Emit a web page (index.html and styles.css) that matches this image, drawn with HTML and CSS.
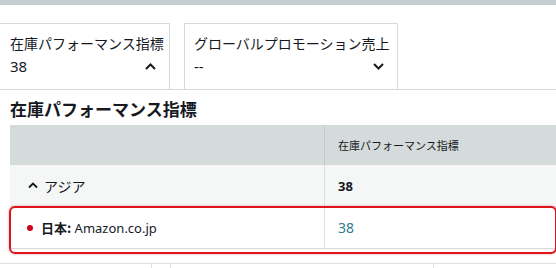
FILE: index.html
```html
<!DOCTYPE html>
<html lang="ja">
<head>
    <meta charset="UTF-8">
    <meta name="viewport" content="width=device-width, initial-scale=1.0">
    <title>在庫パフォーマンス指標</title>
    <link rel="stylesheet" href="styles.css">
</head>
<body>

    <div class="topbar"></div>

    <!-- Metric cards -->
    <div class="cards">
        <div class="card card-first">
            <div class="card-label">在庫パフォーマンス指標</div>
            <div class="card-value">
                <span>38</span>
                <svg class="chevron" width="11" height="7" viewBox="0 0 11 7"><path d="M1 6 L5.5 1.5 L10 6" fill="none" stroke="#16191f" stroke-width="2"/></svg>
            </div>
        </div>
        <div class="card card-second">
            <div class="card-label">グローバルプロモーション売上</div>
            <div class="card-value">
                <span>--</span>
                <svg class="chevron" width="11" height="7" viewBox="0 0 11 7"><path d="M1 1 L5.5 5.5 L10 1" fill="none" stroke="#16191f" stroke-width="2"/></svg>
            </div>
        </div>
    </div>

    <h2 class="section-title">在庫パフォーマンス指標</h2>

    <!-- Table -->
    <div class="table">
        <div class="row row-head">
            <div class="cell cell-name"></div>
            <div class="cell cell-value">在庫パフォーマンス指標</div>
        </div>
        <div class="row row-group">
            <div class="cell cell-name">
                <svg class="group-chevron" width="10" height="7" viewBox="0 0 10 7"><path d="M1 5.5 L5 1.5 L9 5.5" fill="none" stroke="#16191f" stroke-width="1.8"/></svg>
                アジア
            </div>
            <div class="cell cell-value bold">38</div>
        </div>
        <div class="row row-item">
            <div class="cell cell-name">
                <span class="dot"></span>
                <b>日本:</b>&nbsp;Amazon.co.jp
            </div>
            <div class="cell cell-value link">38</div>
        </div>
    </div>

    <div class="footer-strip">
        <div class="strip-cell" style="width: 152px"></div>
        <div class="strip-cell" style="width: 19px"></div>
        <div class="strip-cell" style="width: 263px"></div>
    </div>

</body>
</html>
```

FILE: styles.css
```css
* {
    margin: 0;
    padding: 0;
    box-sizing: border-box;
}

body {
    width: 556px;
    height: 268px;
    overflow: hidden;
    background-color: #fff;
    color: #16191f;
    font-family: "Noto Sans", "Noto Sans CJK JP", sans-serif;
}

.topbar {
    height: 5px;
    background-color: #c6cfd0;
}

/* Metric cards */
.cards {
    display: flex;
    gap: 14px;
    padding-top: 18px;
    border-bottom: 1px solid #d5dbdb;
}

.card {
    height: 66px;
    padding: 9px 16px 0 9px;
    border: 1px solid #d5dbdb;
    border-bottom: none;
}

.card-first {
    width: 171px;
    margin-left: -1px;
    padding-left: 10px;
}

.card-second {
    width: 214px;
}

.card-label {
    font-family: "Noto Sans CJK JP", sans-serif;
    font-size: 14px;
    line-height: 20px;
    white-space: nowrap;
}

.card-value {
    display: flex;
    justify-content: space-between;
    align-items: center;
    margin-top: 3px;
    font-size: 15px;
    line-height: 20px;
}

.chevron {
    margin-right: -3px;
}

.section-title {
    margin: 7px 0 0 10px;
    font-family: "Noto Sans CJK JP", sans-serif;
    font-size: 17px;
    font-weight: bold;
    line-height: 24px;
}

/* Table */
.table {
    width: 546px;
    margin: 4px 0 0 10px;
    font-size: 13px;
}

.row {
    display: flex;
    border-bottom: 1px solid #d5dbdb;
}

.cell {
    display: flex;
    align-items: center;
    padding-left: 13px;
}

.cell-name {
    width: 314px;
}

.cell-value {
    flex: 1;
    border-left: 1px solid #c5cccc;
}

.row-head {
    height: 40px;
    background-color: #d5dbdb;
    border-bottom: none;
}

.row-head .cell-value {
    font-family: "Noto Sans CJK JP", sans-serif;
    font-size: 11px;
    border-left-color: #c2c9c9;
}

.row-group {
    height: 42px;
    background-color: #f5f7f7;
}

.row-group .cell-name {
    padding-left: 18px;
    gap: 6px;
    font-family: "Noto Sans CJK JP", sans-serif;
    font-size: 14px;
}

.row-group .cell-value {
    border-left-color: #d9dede;
}

.bold {
    font-weight: bold;
}

.row-item {
    position: relative;
    height: 42px;
}

.row-item .cell-name {
    padding-left: 17px;
}

.row-item b {
    font-family: "Noto Sans CJK JP", sans-serif;
    margin-left: 8px;
}

.row-item .cell-value {
    border-left-color: #d9dede;
}

.dot {
    width: 6px;
    height: 6px;
    border-radius: 50%;
    background-color: #d0021b;
}

.link {
    color: #2f7d8f;
    font-size: 14px;
}

/* red highlight around the selected row */
.row-item::after {
    content: "";
    position: absolute;
    top: -1px;
    left: -1px;
    width: 544px;
    height: 44px;
    border: 2px solid #e0141c;
    border-radius: 6px;
    box-shadow: 0 0 2px rgba(224, 20, 28, 0.5);
}

.footer-strip {
    display: flex;
    margin-top: 14px;
    height: 10px;
    border-top: 1px solid #dde2e2;
}

.strip-cell {
    border-right: 1px solid #dde2e2;
}
```
